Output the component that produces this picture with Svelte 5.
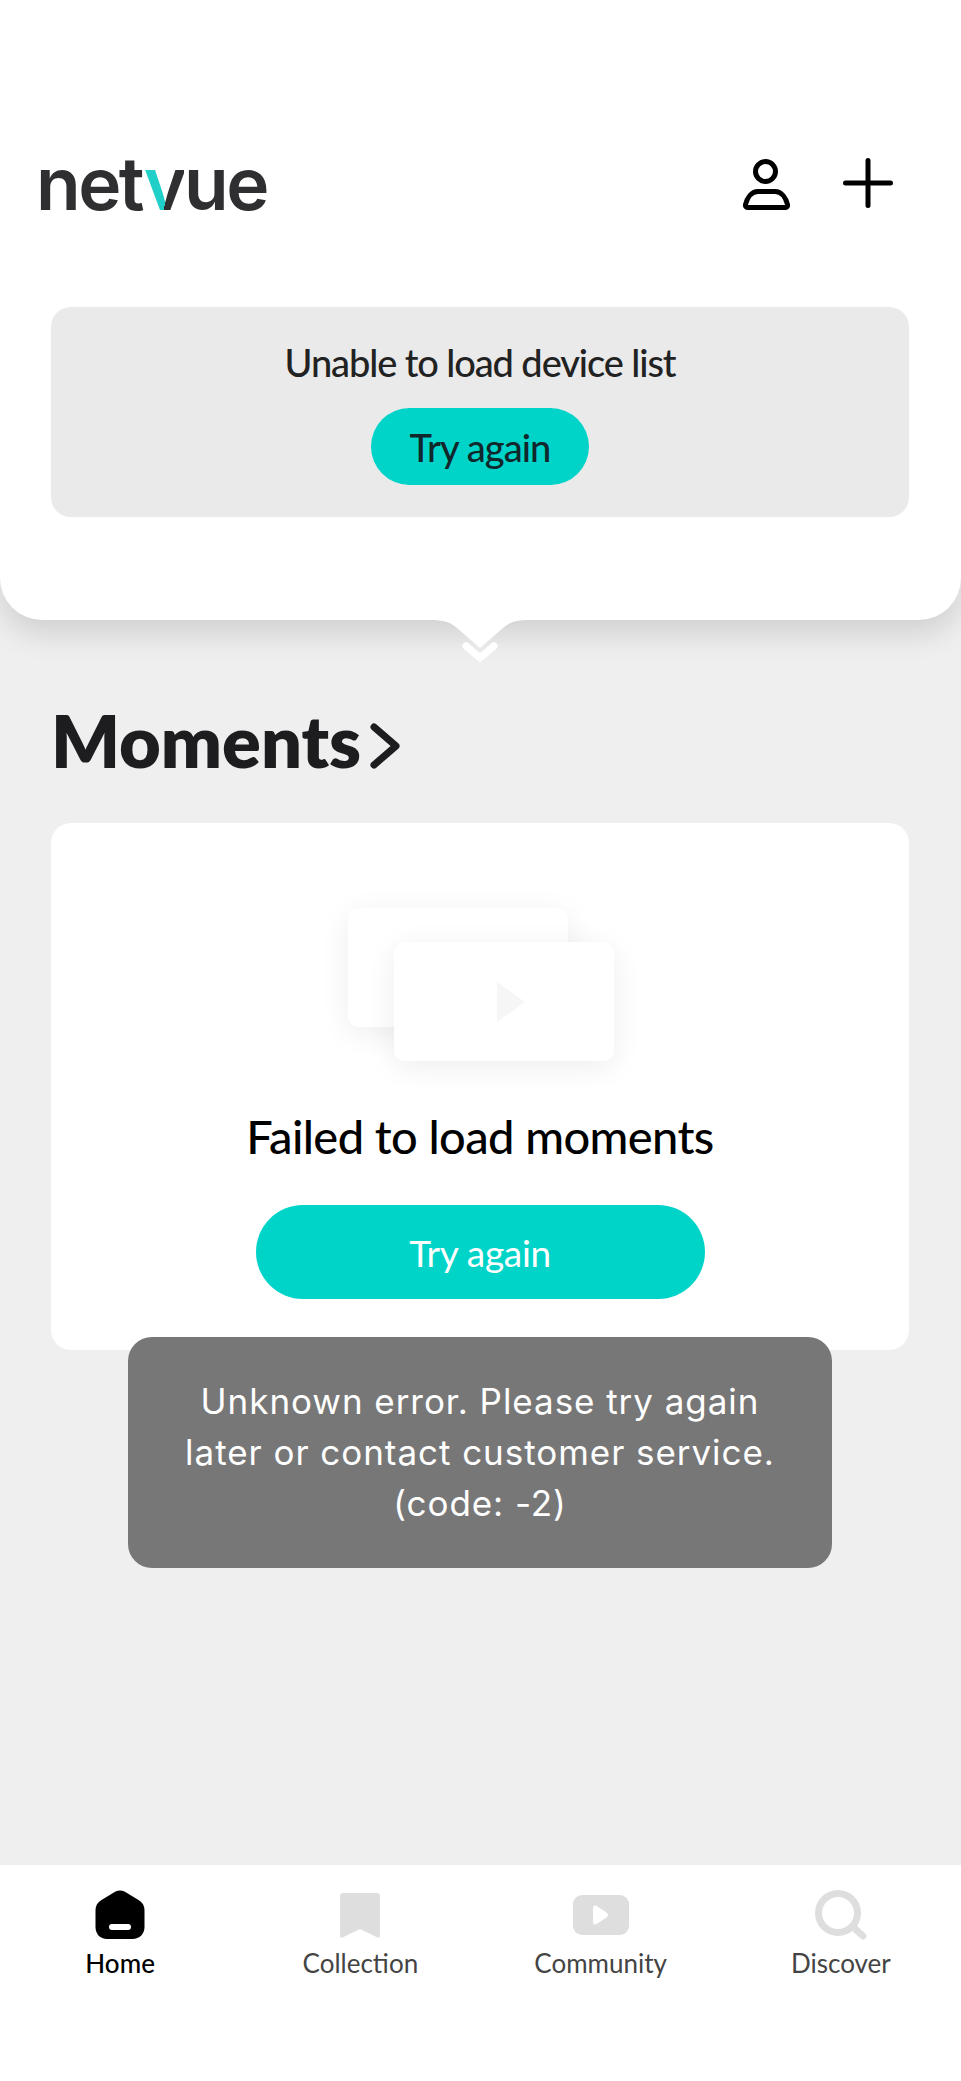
<script>
	const tabs = [
		{ key: 'home', label: 'Home', active: true },
		{ key: 'collection', label: 'Collection' },
		{ key: 'community', label: 'Community' },
		{ key: 'discover', label: 'Discover' }
	];
</script>

<div class="screen">
	<section class="panel">
		<header class="top">
			<div class="logo">net<span class="logo-v">v</span>ue</div>
			<div class="top-icons">
				<svg width="50" height="52" viewBox="0 0 50 52" fill="none" stroke="#000" stroke-width="5">
					<circle cx="24.500" cy="13.500" r="10" />
					<path d="M17 33.500h17c7 0 11 7 12.500 13 .4 1.800-.5 3-2 3H6.500c-1.500 0-2.400-1.200-2-3C6 40.500 10 33.500 17 33.500z" stroke-linejoin="round" />
				</svg>
				<svg width="50" height="50" viewBox="0 0 50 50" fill="none" stroke="#000" stroke-width="5" stroke-linecap="round">
					<path d="M25 2.500v45M2.500 25h45" />
				</svg>
			</div>
		</header>

		<div class="device-error">
			<p>Unable to load device list</p>
			<button class="retry-small">Try again</button>
		</div>

		<svg class="notch" width="100" height="44" viewBox="0 0 100 44">
			<path d="M0 0h100c-14 0-20 2-27 8L50 28 27 8C20 2 14 0 0 0z" fill="#fff" />
			<path d="M36 26l14 12 14-12" fill="none" stroke="#fff" stroke-width="7" stroke-linecap="round" stroke-linejoin="round" />
		</svg>
	</section>

	<main class="content">
		<h2 class="moments-title">
			Moments
			<svg width="30" height="46" viewBox="0 0 30 46" fill="none" stroke="#1d1d20" stroke-width="7" stroke-linecap="round" stroke-linejoin="round">
				<path d="M4 4l22 19L4 42" />
			</svg>
		</h2>

		<div class="moments-card">
			<div class="illustration">
				<div class="thumb thumb-back"></div>
				<div class="thumb thumb-front">
					<svg width="28" height="40" viewBox="0 0 28 40"><path d="M0 0l28 20L0 40z" fill="#f6f6f6" /></svg>
				</div>
			</div>
			<h3>Failed to load moments</h3>
			<button class="retry-large">Try again</button>
		</div>

		<div class="toast">Unknown error. Please try again<br />later or contact customer service.<br />(code: -2)</div>
	</main>

	<nav class="tabbar">
		{#each tabs as tab}
			<div class="tab" class:active={tab.active}>
				<div class="tab-icon">
					{#if tab.key === 'home'}
						<svg width="50" height="50" viewBox="0 0 50 50">
							<path d="M20.500 1.500c3-1.500 6-1.500 9 0l14 8.500c4 2.500 6 5.500 6 10v17c0 7-5 12-12 12H12C5 49 .5 44 .5 37V20c0-4.500 2-7.500 6-10z" fill="#000" />
							<rect x="14" y="34" width="22" height="6" rx="3" fill="#fff" />
						</svg>
					{:else if tab.key === 'collection'}
						<svg width="42" height="46" viewBox="0 0 42 46">
							<path d="M4 1h34c2 0 3 1 3 3v40c0 1.500-1 2-2.500 1.500L21 37 3.500 45.500C2 46 1 45.500 1 44V4c0-2 1-3 3-3z" fill="#dedede" />
						</svg>
					{:else if tab.key === 'community'}
						<svg width="58" height="42" viewBox="0 0 58 42">
							<rect x="1" y="1" width="56" height="40" rx="9" fill="#dedede" />
							<path d="M21 14c0-2 1.500-3 3.500-2l10 6.500c2 1.300 2 3.700 0 5L24.500 30c-2 1-3.500 0-3.500-2z" fill="#fff" />
						</svg>
					{:else}
						<svg width="52" height="50" viewBox="0 0 52 50" fill="none" stroke="#dedede" stroke-width="7" stroke-linecap="round">
							<circle cx="23" cy="23" r="19.500" />
							<path d="M38 37l10 9" />
						</svg>
					{/if}
				</div>
				<span>{tab.label}</span>
			</div>
		{/each}
	</nav>
</div>

<style>
	:global(body) {
		margin: 0;
		background: #efefef;
	}

	.screen {
		min-height: 100vh;
		display: flex;
		flex-direction: column;
		background: #efefef;
		font-family: Lato, 'Liberation Sans', sans-serif;
		overflow: hidden;
	}

	.panel {
		position: relative;
		height: 620px;
		box-sizing: border-box;
		background: #fff;
		border-radius: 0 0 42px 42px;
		box-shadow: 0 14px 30px rgba(0, 0, 0, 0.13);
		padding: 0 52px 0 51px;
	}

	.top {
		display: flex;
		justify-content: space-between;
		align-items: center;
		height: 60px;
		margin: 0 16px 0 -11px;
		padding-top: 154px;
	}

	.logo {
		margin-left: -4px;
		font-family: Inter, sans-serif;
		font-weight: 600;
		font-size: 73px;
		line-height: 60px;
		letter-spacing: -2.500px;
		color: #2f2f31;
	}

	.logo-v {
		background: linear-gradient(100deg, #1fcfc8 58%, #2f2f31 58%);
		-webkit-background-clip: text;
		background-clip: text;
		-webkit-text-fill-color: transparent;
	}

	.top-icons {
		display: flex;
		align-items: flex-start;
		gap: 52px;
	}

	.device-error {
		margin-top: 93px;
		height: 210px;
		box-sizing: border-box;
		background: #eaeaea;
		border-radius: 20px;
		display: flex;
		flex-direction: column;
		align-items: center;
		padding-top: 31px;
	}

	.device-error p {
		margin: 0;
		font-size: 38px;
		line-height: 48px;
		font-weight: 500;
		color: #222;
		letter-spacing: -1.100px;
	}

	button {
		border: 0;
		font-family: inherit;
		background: #00d4c9;
		cursor: pointer;
	}

	.retry-small {
		margin-top: 22px;
		width: 218px;
		height: 77px;
		border-radius: 39px;
		font-size: 38px;
		font-weight: 500;
		color: #10272b;
		letter-spacing: -0.900px;
	}

	.notch {
		position: absolute;
		left: 430px;
		top: 620px;
	}

	.content {
		position: relative;
		flex: 1;
		padding: 0 52px 0 51px;
	}

	.moments-title {
		margin: 75px 0 0;
		display: flex;
		align-items: center;
		gap: 9px;
		font-size: 72px;
		line-height: 90px;
		font-weight: 800;
		color: #1d1d20;
		height: 90px;
		padding-bottom: 38px;
	}

	.moments-title svg {
		margin-top: 12px;
	}

	.moments-card {
		height: 527px;
		box-sizing: border-box;
		background: #fff;
		border-radius: 20px;
		display: flex;
		flex-direction: column;
		align-items: center;
		padding-top: 85px;
	}

	.illustration {
		position: relative;
		width: 266px;
		height: 153px;
		margin-left: 2px;
	}

	.thumb {
		position: absolute;
		width: 220px;
		height: 119px;
		background: #fff;
		border-radius: 10px;
		box-shadow: 0 6px 30px rgba(0, 0, 0, 0.07);
	}

	.thumb-back {
		left: 0;
		top: 0;
	}

	.thumb-front {
		left: 46px;
		top: 34px;
		display: flex;
		align-items: center;
		justify-content: center;
	}

	.thumb-front svg {
		margin-left: 13px;
	}

	.moments-card h3 {
		margin: 47px 0 0;
		font-size: 47px;
		line-height: 56px;
		font-weight: 500;
		color: #000;
		letter-spacing: -0.600px;
	}

	.retry-large {
		margin-top: 41px;
		width: 449px;
		height: 94px;
		border-radius: 47px;
		font-size: 37px;
		color: #fff;
		letter-spacing: -0.300px;
	}

	.toast {
		position: absolute;
		left: 128px;
		top: 717px;
		width: 704px;
		height: 231px;
		box-sizing: border-box;
		padding-top: 39px;
		background: #777;
		border-radius: 24px;
		color: #fff;
		text-align: center;
		font-family: Inter, sans-serif;
		font-size: 35px;
		line-height: 51px;
		letter-spacing: 0.950px;
	}

	.tabbar {
		height: 216px;
		box-sizing: border-box;
		background: #fff;
		display: grid;
		grid-template-columns: repeat(4, 1fr);
		padding-top: 25px;
	}

	.tab {
		display: flex;
		flex-direction: column;
		align-items: center;
		font-size: 26px;
		color: #444;
	}

	.tab.active {
		color: #000;
		font-weight: 500;
	}

	.tab-icon {
		height: 50px;
		display: flex;
		align-items: center;
		justify-content: center;
	}

	.tab span {
		margin-top: 7px;
		line-height: 32px;
	}
</style>
